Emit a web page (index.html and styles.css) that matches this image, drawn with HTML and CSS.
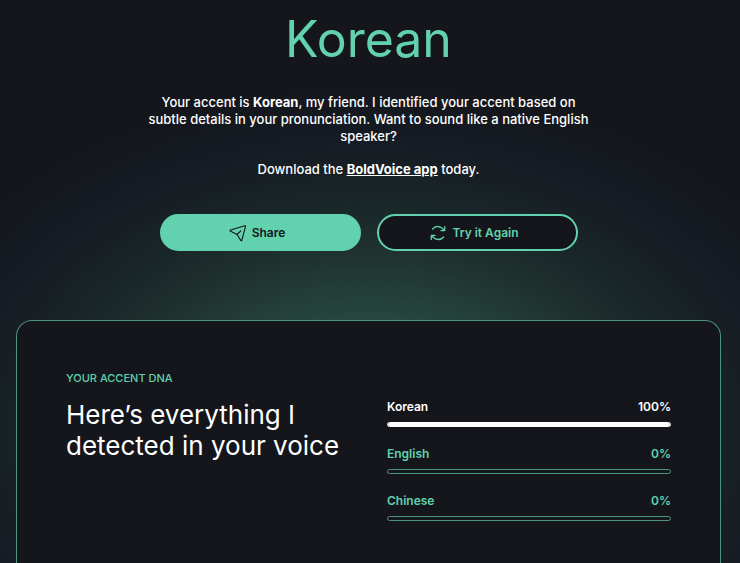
FILE: index.html
```html
<!DOCTYPE html>
<html lang="en">
<head>
    <meta charset="UTF-8">
    <meta name="viewport" content="width=device-width, initial-scale=1.0">
    <title>Your Accent</title>
    <link rel="stylesheet" href="styles.css">
</head>
<body>
    <main class="page">
        <section class="result">
            <h1>Korean</h1>
            <p>Your accent is <strong>Korean</strong>, my friend. I identified your accent based on subtle details in your pronunciation. Want to sound like a native English speaker?</p>
            <p>Download the <a href="#">BoldVoice app</a> today.</p>
            <div class="actions">
                <button class="btn btn-primary" type="button">
                    <svg class="icon" viewBox="0 0 18 18" fill="none" stroke="currentColor" stroke-width="1.1" stroke-linejoin="round" stroke-linecap="round" aria-hidden="true">
                        <path d="M1.3 7.1 Q.7 6.4 1.6 6.1 L15.8 1.7 Q16.7 1.5 16.5 2.4 L12.8 16.4 Q12.3 17.2 11.8 16.4 L8 10.5 Z"/>
                        <path d="M8 10.5 L11.8 6.9"/>
                    </svg>
                    Share
                </button>
                <button class="btn btn-outline" type="button">
                    <svg class="icon" viewBox="0 0 18 18" fill="none" stroke="currentColor" stroke-width="1.3" stroke-linejoin="round" stroke-linecap="round" aria-hidden="true">
                        <path d="M3.6 5 C6.6 1.4 12 1.6 15 6.2"/>
                        <path d="M15.7 2.6 V6.6 H11.9"/>
                        <path d="M14.6 13 C11.6 16.6 6.2 16.4 3 11.8"/>
                        <path d="M2.3 15.4 V11.4 H6.1"/>
                    </svg>
                    Try it Again
                </button>
            </div>
        </section>

        <section class="panel">
            <div class="panel-intro">
                <p class="eyebrow">Your accent DNA</p>
                <h2>Here’s everything I detected in your voice</h2>
            </div>
            <div class="scores">
                <div class="score top">
                    <label for="korean">Korean</label>
                    <span>100%</span>
                    <progress id="korean" value="100" max="100"></progress>
                </div>
                <div class="score">
                    <label for="english">English</label>
                    <span>0%</span>
                    <progress id="english" value="0" max="100"></progress>
                </div>
                <div class="score">
                    <label for="chinese">Chinese</label>
                    <span>0%</span>
                    <progress id="chinese" value="0" max="100"></progress>
                </div>
            </div>
        </section>
    </main>
</body>
</html>
```
FILE: styles.css
```css
* {
    box-sizing: border-box;
}
body {
    margin: 0;
    background-color: #14161b;
    color: #fff;
    font-family: Inter, "Liberation Sans", sans-serif;
    font-size: 13px;
    line-height: 17px;
}
.page {
    display: flex;
    flex-direction: column;
    min-height: 100vh;
    padding: 7px 19px 0 16px;
    background: radial-gradient(ellipse 470px 330px at 50% 430px, #2c5247 0%, #264640 34%, #1f332f 53%, #1a282a 66%, #171f25 80%, #151a22 92%, #14161b 105%);
}
.result {
    width: 100%;
    max-width: 448px;
    margin: 0 auto;
    text-align: center;
}
h1 {
    margin: 0 0 23px;
    color: #62d1ad;
    font-size: 50px;
    font-weight: 400;
    line-height: 64px;
}
.result p {
    margin: 0 0 16px;
    font-weight: 500;
}
.result strong,
.result a {
    font-weight: 700;
}
.result a {
    color: #fff;
}
.actions {
    display: flex;
    gap: 16px;
    padding: 20px 15px 0;
}
.btn {
    display: flex;
    flex: 1;
    justify-content: center;
    align-items: center;
    gap: 5px;
    height: 37px;
    padding: 0 8px 0 2px;
    border: 2px solid #62d1ad;
    border-radius: 19px;
    font-family: inherit;
    font-size: 12px;
    font-weight: 600;
    cursor: pointer;
}
.btn-primary {
    background-color: #62d1ad;
    color: #14161b;
}
.btn-outline {
    background-color: #14161b;
    color: #62d1ad;
}
.icon {
    width: 18px;
    height: 18px;
}
.panel {
    display: grid;
    grid-template-columns: 1fr 1fr;
    gap: 37px;
    flex: 1;
    margin-top: 69px;
    padding: 49px 49px 0;
    border: 1px solid #4b947e;
    border-bottom: none;
    border-radius: 16px 16px 0 0;
    background-color: #14161b;
}
.eyebrow {
    margin: 0 0 12px;
    color: #62d1ad;
    font-size: 11px;
    font-weight: 500;
    text-transform: uppercase;
}
h2 {
    margin: 0;
    font-size: 26px;
    font-weight: 400;
    line-height: 31px;
}
.scores {
    display: flex;
    flex-direction: column;
    gap: 18px;
    padding-top: 28px;
}
.score {
    display: grid;
    grid-template-columns: 1fr auto;
    row-gap: 7px;
    color: #62d1ad;
    font-size: 12px;
    font-weight: 600;
}
.score.top {
    color: #fff;
}
progress {
    grid-column: 1 / -1;
    display: block;
    width: 100%;
    height: 5px;
    border: 1px solid #4b947e;
    border-radius: 3px;
    overflow: hidden;
    background-color: #14161b;
    appearance: none;
}
.top progress {
    border-color: #fff;
    background-color: #fff;
}
progress::-webkit-progress-bar {
    background-color: transparent;
}
progress::-webkit-progress-value {
    background-color: #fff;
}
progress::-moz-progress-bar {
    background-color: #fff;
}
```
